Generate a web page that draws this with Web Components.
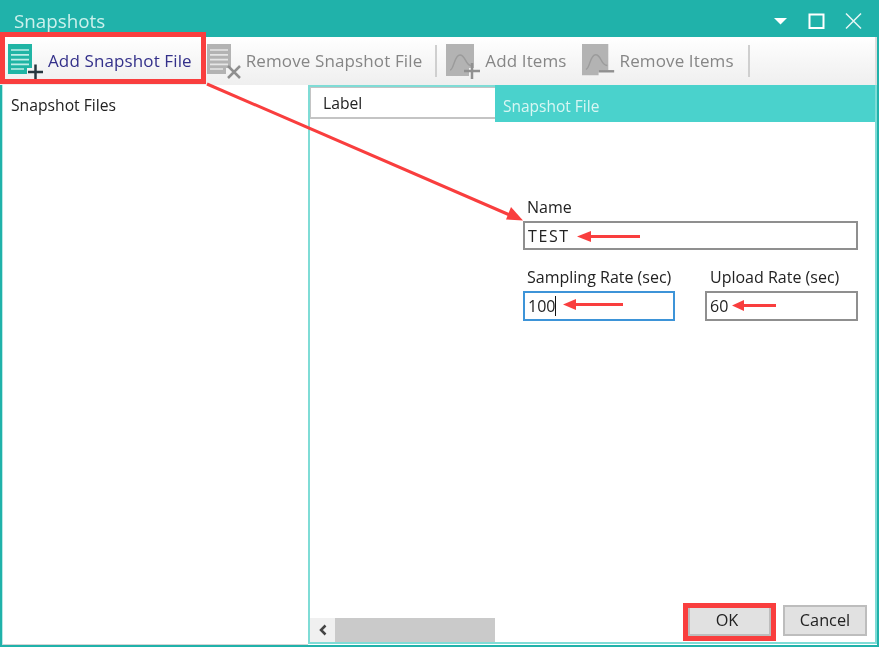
<!DOCTYPE html>
<html lang="en"><head><meta charset="utf-8"><title>Snapshots</title>
<style>
html,body{margin:0;padding:0;background:#fff}
body{font-family:"Open Sans","Liberation Sans",sans-serif;width:879px;height:647px;overflow:hidden}
</style></head><body>
<snap-window>
  <snap-titlebar slot="title">Snapshots</snap-titlebar>
  <snap-toolbar slot="toolbar">
    <tool-button icon="add-file" active style="margin-left:8px;--w:40px">Add Snapshot File</tool-button>
    <tool-button icon="remove-file" style="margin-left:15px">Remove Snapshot File</tool-button>
    <tool-sep style="margin-left:13px"></tool-sep>
    <tool-button icon="add-items" style="margin-left:9px">Add Items</tool-button>
    <tool-button icon="remove-items" style="margin-left:15px;--w:38px">Remove Items</tool-button>
    <tool-sep style="margin-left:14px"></tool-sep>
  </snap-toolbar>
  <snap-tree slot="left">Snapshot Files</snap-tree>
  <snap-panel slot="right">
    <span slot="column">Label</span>
    <span slot="heading">Snapshot File</span>
    <snap-form>
      <snap-field style="grid-column:1 / 3;--h:29px;--ls:1.6px" label="Name" value="TEST"></snap-field>
      <snap-field label="Sampling Rate (sec)" value="100" focused></snap-field>
      <snap-field style="--lp:5px" label="Upload Rate (sec)" value="60"></snap-field>
    </snap-form>
    <snap-button slot="actions" style="margin-right:12px;width:83px;padding-right:5px">OK</snap-button>
    <snap-button slot="actions">Cancel</snap-button>
  </snap-panel>
</snap-window>
<snap-annotations></snap-annotations>
<script>
function def(name, css, html){
  customElements.define(name, class extends HTMLElement{
    constructor(){super();const r=this.attachShadow({mode:'open'});
      r.innerHTML='<style>'+css+'</style>'+(typeof html==='function'?html(this):html);}
  });
}
def('snap-window',`
 :host{display:grid;grid-template-columns:306px 1fr;grid-template-rows:37px 48px 1fr;width:879px;height:647px;box-sizing:border-box;
   border:solid #20b2aa;border-width:0 2px 2px 2px;background:#fff;filter:blur(.4px)}
 ::slotted([slot=title]),::slotted([slot=toolbar]){grid-column:1 / 3}
 ::slotted([slot=title]){margin:0 -2px}
`,`<slot name="title"></slot><slot name="toolbar"></slot><slot name="left"></slot><slot name="right"></slot>`);

def('snap-titlebar',`
 :host{display:flex;align-items:center;background:#20b2aa;color:#cdf1ed;font-size:18.8px;padding:4px 0 0 14px;box-sizing:border-box;height:37px}
 .t{flex:1}
 svg{display:block;margin:4px 15px 0 0}
`,`<span class="t"><slot></slot></span>
<svg width="90" height="24" viewBox="0 0 90 24" fill="none">
 <path d="M0 7h13l-6.500 6.500z" fill="#fff"/>
 <rect x="35.500" y="3.500" width="14" height="13.500" stroke="#fff" stroke-width="2"/>
 <path d="M72 2.500l15 15M87 2.500l-15 15" stroke="#e6f7f5" stroke-width="1.500"/>
</svg>`);

def('snap-toolbar',`
 :host{display:flex;align-items:center;height:48px;background:linear-gradient(#fff,#f8f8f8 40%,#efefef);margin-left:-2px;box-shadow:inset -2px 0 0 #dcdcdc}
`,`<slot></slot>`);

const fileShape='M0 0h24v24h-5v6H0z';
const fileLines='M3 6h18M3 10.800h18M3 15.600h18M3 20.400h18M3 25h13';
const icons={
 'add-file':`<path d="${fileShape}" fill="#20b5a5"/><path d="${fileLines}" stroke="#bfeee8" stroke-width="1.700"/><path d="M20 28h15M27.500 20.500v15" stroke="#27373f" stroke-width="2.500"/>`,
 'remove-file':`<path d="${fileShape}" fill="#b3b3b3"/><path d="${fileLines}" stroke="#e6e6e6" stroke-width="1.700"/><path d="M21 22l12 12M33 22l-12 12" stroke="#8f8f8f" stroke-width="2.500"/>`,
 'add-items':`<path d="M0 0h28v24h-5v8H0z" fill="#b3b3b3"/><path d="M4 26c4 0 4-15 10-15s5 11 12 11" fill="none" stroke="#9b9b9b" stroke-width="1.500"/><path d="M18 27h16M26 19v16" stroke="#909090" stroke-width="2.500"/>`,
 'remove-items':`<path d="M0 0h27v27h-10v5H0z" fill="#b3b3b3"/><path d="M4 26c4 0 4-15 10-15s5 11 12 11" fill="none" stroke="#9b9b9b" stroke-width="1.500"/><path d="M17 28h16" stroke="#909090" stroke-width="2.500"/>`
};
def('tool-button',`
 :host{display:flex;align-items:center;height:48px;font-size:17px;letter-spacing:.12px;color:#868686;white-space:nowrap}
 :host([active]){color:#33308a}
 svg{display:block;flex:none;width:var(--w,39px);height:36px;margin-top:1px;overflow:visible}
 span{margin-top:-2px}
`,h=>`<svg viewBox="0 0 39 36" preserveAspectRatio="xMinYMin">${icons[h.getAttribute('icon')]}</svg><span><slot></slot></span>`);

def('tool-sep',`:host{display:block;width:2px;height:32px;background:#cfcfcf}`,'');

def('snap-tree',`
 :host{display:block;font-size:15.7px;color:#222;padding:9px 0 0 8px;line-height:22px;background:#fff;border-left:1px solid #b9e9e5;border-bottom:1px solid #d4d4d4;box-sizing:border-box}
`,`<slot></slot>`);

def('snap-panel',`
 :host{display:grid;grid-template-columns:185px 1fr;grid-template-rows:35px 1fr auto;box-sizing:border-box;border:2px solid #7fdcd6;margin-bottom:1px;min-height:0;background:#fff}
 .col{height:32px;box-sizing:border-box;border:solid #c4c4c4;border-width:1px 0 2px 1px;font-size:15.7px;color:#222;padding-left:12px;line-height:30px;background:#fff}
 .head{background:#4ad2cc;color:#d8f6f3;font-size:15.5px;padding:9px 0 0 8px;line-height:24px;box-sizing:border-box;margin-top:-2px;height:37px}
 .main{grid-column:1 / 3;min-height:0}
 .foot{grid-column:1 / 3;display:grid;grid-template-columns:25px 160px 1fr auto;align-items:end;padding-right:8px}
 .arrow{height:24px;background:#f0f0f0;display:flex;align-items:center;justify-content:center}
 .thumb{height:24px;background:#cacaca}
 .actions{display:flex;align-items:center;padding-bottom:6px}
`,`<div class="col"><slot name="column"></slot></div><div class="head"><slot name="heading"></slot></div>
<div class="main"><slot></slot></div>
<div class="foot"><div class="arrow"><svg width="10" height="12" viewBox="0 0 10 12"><path d="M7.500 1.500L3 6l4.500 4.500" fill="none" stroke="#444" stroke-width="2.500"/></svg></div><div class="thumb"></div><div></div><div class="actions"><slot name="actions"></slot></div></div>`);

def('snap-form',`
 :host{display:grid;grid-template-columns:152px 153px;column-gap:30px;row-gap:16px;width:335px;margin:74px 0 0 213px}
`,`<slot></slot>`);

def('snap-field',`
 :host{display:block;font-size:16px;color:#222}
 label{display:block;padding:1px 0 0 var(--lp,4px);line-height:20px;height:19px;margin-bottom:5px;white-space:nowrap}
 .i{box-sizing:border-box;height:var(--h,30px);border:2px solid #8f8f8f;background:#fff;padding-left:3px;font-size:16px;color:#222;display:flex;align-items:center;letter-spacing:var(--ls,0)}
 :host([focused]) .i{border-color:#3d94d8}
 .c{display:inline-block;width:1px;height:20px;background:#111}
`,h=>`<label>${h.getAttribute('label')}</label><div class="i"><span>${h.getAttribute('value')}</span>${h.hasAttribute('focused')?'<span class="c"></span>':''}</div>`);

def('snap-button',`
 :host{display:block;width:84px;height:31px;box-sizing:border-box;border:2px solid #bdbdbd;background:#e1e1e1;font-size:16.3px;color:#222;text-align:center;line-height:27px}
`,`<slot></slot>`);

def('snap-annotations',`
 :host{position:absolute;left:0;top:0;width:879px;height:647px;pointer-events:none;display:block;filter:blur(.4px)}
 svg{display:block}
`,`<svg width="879" height="647" viewBox="0 0 879 647" fill="none">
 <rect x="2.500" y="34.500" width="201" height="47" stroke="#f93e3e" stroke-width="5"/>
 <rect x="685.500" y="605.500" width="88" height="33" stroke="#f93e3e" stroke-width="5"/>
 <path d="M207 84L512 216" stroke="#f93e3e" stroke-width="3"/>
 <path d="M523 220.500L506 219.500L511 207z" fill="#f93e3e"/>
 <path d="M590 236.500h50" stroke="#f93e3e" stroke-width="3"/><path d="M577 236.500L591 231v11z" fill="#f93e3e"/>
 <path d="M575 304.500h48" stroke="#f93e3e" stroke-width="3"/><path d="M563 304.500L576 299v11z" fill="#f93e3e"/>
 <path d="M743 305.500h33" stroke="#f93e3e" stroke-width="3"/><path d="M732 305.500L744 300v11z" fill="#f93e3e"/>
</svg>`);
</script>
</body></html>
